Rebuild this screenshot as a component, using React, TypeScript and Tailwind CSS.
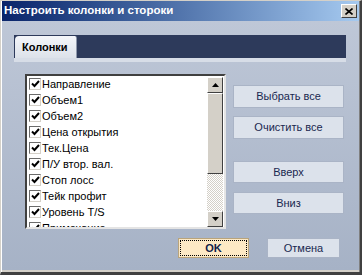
import React from "react";

const items = [
  "Направление",
  "Объем1",
  "Объем2",
  "Цена открытия",
  "Тек.Цена",
  "П/У втор. вал.",
  "Стоп лосс",
  "Тейк профит",
  "Уровень T/S",
  "Примечание",
];

function Check() {
  return (
    <div className="w-[12px] h-[12px] bg-white border border-t-[#6b6b6b] border-l-[#6b6b6b] border-r-[#d4d0c8] border-b-[#d4d0c8] flex items-center justify-center shrink-0">
      <svg width="9" height="8" viewBox="0 0 9 8">
        <path d="M1 3.5 L3.5 6 L8 1" stroke="#000" strokeWidth="2" fill="none" />
      </svg>
    </div>
  );
}

function SBtn({ dir }: { dir: "up" | "down" }) {
  return (
    <div className="h-[16px] w-[16px] bg-[#d4d0c8] border border-t-white border-l-white border-r-[#404040] border-b-[#404040] flex items-center justify-center">
      <svg width="7" height="4" viewBox="0 0 7 4">
        {dir === "up" ? <path d="M3.5 0 L7 4 L0 4 Z" fill="#000" /> : <path d="M0 0 L7 0 L3.5 4 Z" fill="#000" />}
      </svg>
    </div>
  );
}

function Btn({ label, className }: { label: string; className: string }) {
  return (
    <div
      className={
        "bg-[#dce2eb] border border-[#aab4c6] flex items-center justify-center text-[11px] text-[#1a2850] " +
        className
      }
    >
      {label}
    </div>
  );
}

export default function App() {
  return (
    <div
      className="w-[362px] h-[275px] bg-[#d4d0c8] border-t border-l border-t-[#d4d0c8] border-l-[#d4d0c8] border-r-2 border-b-[3px] border-r-[#404040] border-b-[#404040] flex flex-col overflow-hidden"
      style={{ fontFamily: '"Liberation Sans", Arial, sans-serif' }}
    >
      <div className="flex-1 flex flex-col border-l border-l-white border-r border-r-[#808080] pb-[2px]">
        <div className="h-[20px] shrink-0 bg-gradient-to-r from-[#0a246a] to-[#a6caf0] flex items-center justify-between pl-[2px] pr-[2px]">
          <span className="text-white font-bold text-[11.5px] leading-none">Настроить колонки и стороки</span>
          <div className="w-[16px] h-[14px] bg-[#d4d0c8] border border-t-white border-l-white border-r-[#404040] border-b-[#404040] flex items-center justify-center">
            <svg width="8" height="7" viewBox="0 0 8 7">
              <path d="M0.5 0.5 L7.5 6.5 M7.5 0.5 L0.5 6.5" stroke="#000" strokeWidth="1.6" />
            </svg>
          </div>
        </div>
        <div className="flex-1 flex flex-col bg-gradient-to-b from-[#bec7d7] to-[#a6b2c6]">
          <div className="mt-[14px] ml-[12px] w-[332px] h-[23px] bg-[#2d3a5b] flex items-end pl-[1px]">
            <div className="w-[62px] h-[22px] rounded-tl-[4px] rounded-tr-[2px] bg-gradient-to-b from-[#f4f6fa] to-[#dde2ea] border-r border-r-[#8e98ac] flex items-center pl-[7px] text-[11px] font-bold text-black">
              Колонки
            </div>
          </div>
          <div className="ml-[12px] w-[332px] h-[4px] bg-[#d7dde7]" />
          <div className="mt-[12px] flex">
            <div className="ml-[23px] w-[201px] h-[155px] border-2 border-t-[#404040] border-l-[#404040] border-r-[#e4e4e4] border-b-[#e4e4e4] bg-white flex overflow-hidden">
              <div className="flex-1 overflow-hidden">
                {items.map((t) => (
                  <div key={t} className="h-[16px] flex items-center pl-[2px]">
                    <Check />
                    <span className="ml-[1px] text-[11px] text-black whitespace-nowrap leading-none">{t}</span>
                  </div>
                ))}
              </div>
              <div className="w-[16px] flex flex-col mr-[1px] mt-[1px]">
                <SBtn dir="up" />
                <div className="h-[81px] bg-[#d4d0c8] border border-t-white border-l-white border-r-[#404040] border-b-[#404040]" />
                <div className="flex-1 bg-[repeating-conic-gradient(#d4d0c8_0%_25%,#ffffff_0%_50%)] bg-[length:2px_2px]" />
                <SBtn dir="down" />
              </div>
            </div>
            <div className="ml-[7px] w-[111px] pt-[11px] flex flex-col">
              <Btn label="Выбрать все" className="h-[23px]" />
              <Btn label="Очистить все" className="h-[23px] mt-[8px]" />
              <Btn label="Вверх" className="h-[22px] mt-[22px]" />
              <Btn label="Вниз" className="h-[22px] mt-[9px]" />
            </div>
          </div>
          <div className="mt-[9px] flex items-start">
            <div className="ml-[176px] w-[71px] h-[20px] bg-[#fde9c5] border border-[#b9a47c] p-[1px]">
              <div className="w-full h-full border border-dotted border-black flex items-center justify-center text-[11px] font-bold text-[#10204a]">
                OK
              </div>
            </div>
            <Btn label="Отмена" className="ml-[18px] w-[73px] h-[20px]" />
          </div>
        </div>
      </div>
    </div>
  );
}
